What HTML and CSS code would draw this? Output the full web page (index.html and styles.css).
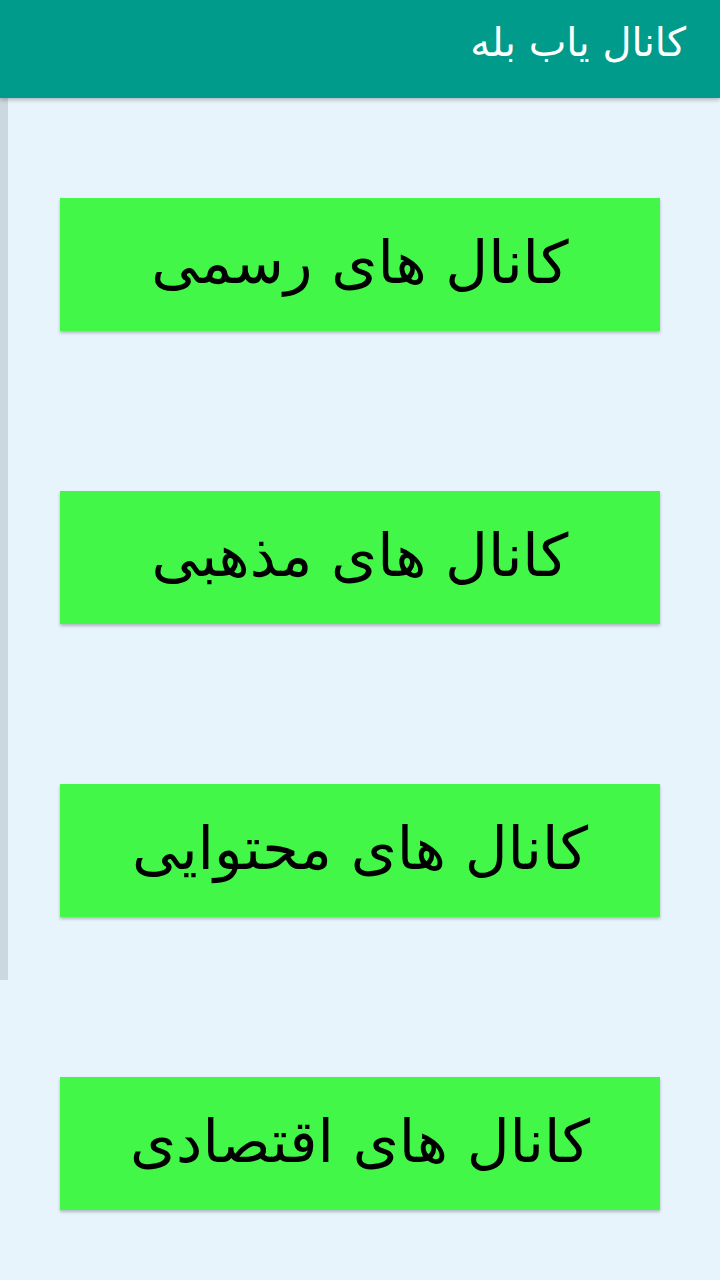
FILE: index.html
```html
<!DOCTYPE html>
<html lang="fa" dir="rtl">
<head>
<meta charset="utf-8">
<link rel="stylesheet" href="styles.css">
</head>
<body>
<header class="appbar"><h1 class="title">کانال یاب بله</h1></header>
<main class="content">
  <div class="scrollbar"></div>
  <div class="list">
    <button class="btn">کانال های رسمی</button>
    <button class="btn">کانال های مذهبی</button>
    <button class="btn">کانال های محتوایی</button>
    <button class="btn">کانال های اقتصادی</button>
  </div>
</main>
</body>
</html>
```
FILE: styles.css
```css
html, body { margin: 0; padding: 0; }
body {
  width: 720px; height: 1280px; overflow: hidden;
  background: #e8f4fc;
  font-family: "DejaVu Sans", "Noto Sans", sans-serif;
}
.appbar {
  height: 98px; background: #009b8a;
  display: flex; align-items: center;
  padding: 0 34px;
  box-shadow: 0 2px 4px rgba(0,0,0,0.25);
  position: relative; z-index: 2;
}
.title {
  margin: 0; color: #fff; font-weight: normal; font-size: 40px;
  margin-top: -14px;
}
.content { position: relative; }
.scrollbar {
  position: absolute; left: 0; top: 0; width: 8px; height: 882px;
  background: #ccd8df;
}
.list {
  display: flex; flex-direction: column; align-items: center;
  gap: 160px; padding-top: 100px;
}
.btn {
  width: 600px; height: 133px; border: 0; margin: 0; padding: 0 0 4px;
  background: #43f748; color: #000;
  font-family: inherit; font-size: 59px;
  box-shadow: 0 2px 3px rgba(0,0,0,0.25);
  direction: rtl;
}
```
